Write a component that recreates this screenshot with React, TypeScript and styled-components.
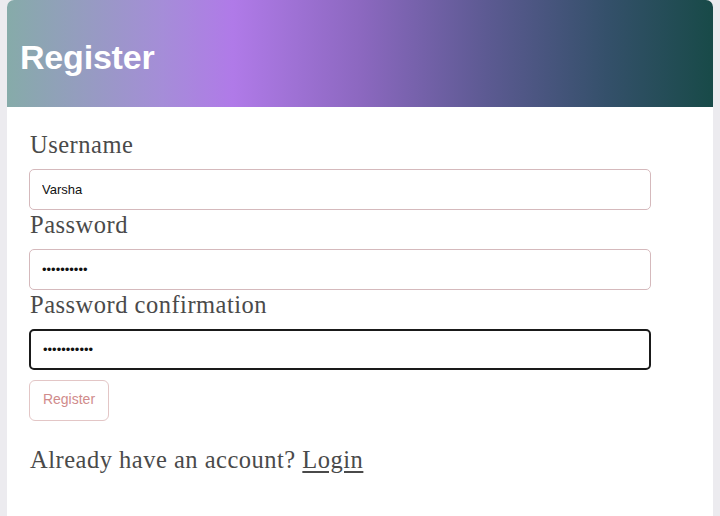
import styled, { createGlobalStyle } from 'styled-components';

const GlobalStyle = createGlobalStyle`
  html, body {
    margin: 0;
    padding: 0;
    background: #ecebef;
  }
`;

const Card = styled.div`
  margin: 0 7px;
  min-height: 540px;
  background: #fff;
  border-radius: 7px 7px 0 0;
  overflow: hidden;
`;

const Header = styled.div`
  height: 107px;
  box-sizing: border-box;
  display: flex;
  align-items: center;
  padding: 8px 0 0 13px;
  background: linear-gradient(
    to right,
    #86aba9 0%,
    #a58dd8 22%,
    #b07ae8 32%,
    #8c68c0 50%,
    #5c5a92 68%,
    #34506a 85%,
    #184a48 100%
  );
`;

const Title = styled.h1`
  margin: 0;
  color: #fff;
  font-family: 'Liberation Sans', Arial, sans-serif;
  font-weight: 700;
  font-size: 34px;
  letter-spacing: -0.2px;
`;

const Form = styled.form`
  display: flex;
  flex-direction: column;
  align-items: flex-start;
  padding: 23px 22px 0;
`;

const Label = styled.label`
  font-family: 'Liberation Serif', 'Times New Roman', serif;
  font-size: 24.5px;
  letter-spacing: 0.5px;
  line-height: 29px;
  color: #4a4a4a;
  margin: 0 0 10px 1px;
`;

const Input = styled.input<{ $active?: boolean }>`
  box-sizing: border-box;
  width: 622px;
  height: 41px;
  padding: 0 12px;
  border: ${(p) => (p.$active ? '2px solid #1a1a1a' : '1px solid #d5b9bc')};
  border-radius: 5px;
  font-family: 'Liberation Sans', Arial, sans-serif;
  font-size: 13px;
  color: #111;
  background: #fff;
  outline: none;
`;

const Button = styled.button`
  margin-top: 10px;
  width: 80px;
  height: 41px;
  background: #fff;
  border: 1px solid #e3c6c6;
  border-radius: 6px;
  color: #d08b8b;
  font-family: 'Liberation Sans', Arial, sans-serif;
  font-size: 14px;
  padding: 0 0 3px;
`;

const Footer = styled.p`
  margin: 24px 0 0 1px;
  font-family: 'Liberation Serif', 'Times New Roman', serif;
  font-size: 24.5px;
  letter-spacing: 0.5px;
  line-height: 29px;
  color: #4a4a4a;
`;

const LoginLink = styled.a`
  color: #4a4a4a;
  text-decoration: underline;
  text-underline-offset: 3px;
`;

export default function App() {
  return (
    <>
      <GlobalStyle />
      <Card>
        <Header>
          <Title>Register</Title>
        </Header>
        <Form onSubmit={(e) => e.preventDefault()}>
          <Label htmlFor="username">Username</Label>
          <Input id="username" defaultValue="Varsha" />
          <Label htmlFor="password">Password</Label>
          <Input id="password" type="password" defaultValue="1234567890" />
          <Label htmlFor="confirm">Password confirmation</Label>
          <Input id="confirm" type="password" defaultValue="12345678901" $active autoFocus />
          <Button type="submit">Register</Button>
          <Footer>
            Already have an account? <LoginLink href="#">Login</LoginLink>
          </Footer>
        </Form>
      </Card>
    </>
  );
}
